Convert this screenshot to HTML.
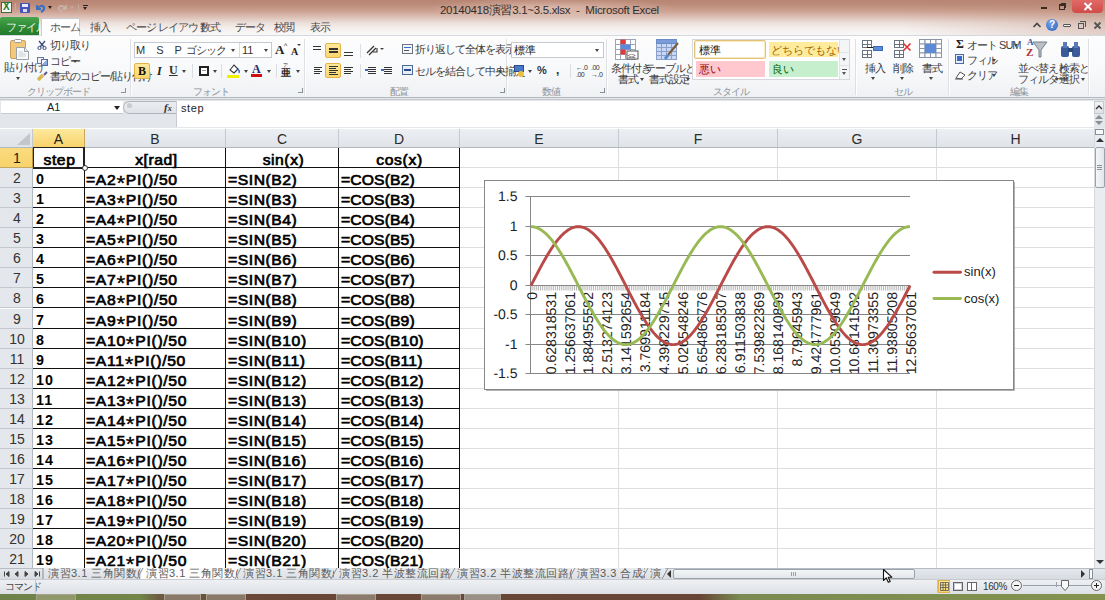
<!DOCTYPE html><html><head><meta charset="utf-8"><style>
*{margin:0;padding:0;box-sizing:border-box}
html,body{width:1105px;height:600px;overflow:hidden;background:#fff;font-family:"Liberation Sans",sans-serif}
body{position:relative}
.a{position:absolute;white-space:nowrap}
.jp{font-size:11px;color:#3c3c3c;line-height:12px;letter-spacing:-1px}
.gl{font-size:10px;color:#8e939a;line-height:11px;letter-spacing:-1px}
.sep{position:absolute;top:39px;width:1px;height:56px;background:#dde0e4;box-shadow:1px 0 0 #fff}
.dd{position:absolute;width:0;height:0;border-left:2.5px solid transparent;border-right:2.5px solid transparent;border-top:3px solid #444}
.hl{position:absolute;background:linear-gradient(#fde99a,#fbd66e);border:1px solid #e0b44a;border-radius:2px}
.ch{position:absolute;top:129px;height:19px;background:linear-gradient(#eceff3,#dfe3e8);border-right:1px solid #c4c9cf;font-size:14px;color:#2b2b2b;text-align:center;line-height:20px}
.rh{position:absolute;left:0;width:33px;height:20px;background:#e4e7eb;border-bottom:1px solid #c4c9cf;font-size:14px;color:#333;text-align:center;padding-left:1px;line-height:21px}
.c{position:absolute;height:20px;font-size:14px;font-weight:normal;color:#000;line-height:24px;white-space:nowrap;transform:scaleX(1.12);transform-origin:0 0;-webkit-text-stroke:.65px #000}
.as{font-size:20px;vertical-align:-5px;line-height:10px;font-weight:normal;-webkit-text-stroke:.3px #000}
</style></head><body>
<div class="a" style="left:0;top:0;width:1105px;height:35px;background:linear-gradient(#b88573 0px,#bb8a78 4px,#c99c8b 10px,#dcc0b5 17px,#ece0db 23px,#f5f0ee 29px,#f8f7f7 34px)"></div>
<div class="a" style="left:900px;top:0;width:205px;height:35px;background:linear-gradient(90deg,rgba(184,133,115,0),rgba(184,133,115,.35))"></div>
<div class="a" style="left:1px;top:2px;width:11px;height:11px;background:#f4f8f0;border:1px solid #3d6b3a"></div>
<div class="a" style="left:3px;top:1px;font-size:10px;font-weight:bold;color:#1f7a2a;line-height:12px">X</div>
<div class="a" style="left:15px;top:3px;width:1px;height:11px;background:#c8a898"></div>
<div class="a" style="left:20px;top:3px;width:10px;height:10px;background:#4a54b8;border-radius:1px"></div>
<div class="a" style="left:22px;top:4px;width:6px;height:3px;background:#e8ecf8"></div>
<div class="a" style="left:23px;top:9px;width:4px;height:3px;background:#d8dcf0"></div>
<svg class="a" style="left:35px;top:3px" width="11" height="10"><path d="M2 2 L2 6 L6 6 M2 6 Q6 1 9 4 Q10 7 6 9" stroke="#3b6fc0" stroke-width="2" fill="none"/></svg>
<div class="dd" style="left:48px;top:6px;border-top-color:#222"></div>
<svg class="a" style="left:57px;top:3px" width="11" height="10"><path d="M9 2 L9 6 L5 6 M9 6 Q5 1 2 4 Q1 7 5 9" stroke="#c9b4ab" stroke-width="1.6" fill="none"/></svg>
<div class="dd" style="left:70px;top:6px;border-top-color:#c0a89c"></div>
<div class="a" style="left:78px;top:4px;width:1px;height:9px;background:#c8a898"></div>
<div class="a" style="left:83px;top:5px;width:5px;height:1px;background:#222"></div>
<div class="dd" style="left:83px;top:7px;border-top-color:#222"></div>
<div class="a" style="left:425px;top:-2px;width:255px;height:20px;background:radial-gradient(ellipse at center,rgba(240,215,205,.55),rgba(240,215,205,0) 70%)"></div>
<div class="a" style="left:440px;top:4px;font-size:11.5px;color:#2e2e2e;line-height:13px;letter-spacing:-.3px">20140418演習3.1~3.5.xlsx&nbsp; - &nbsp;Microsoft Excel</div>
<div class="a" style="left:1041px;top:7px;width:6px;height:2px;background:#3a2a24"></div>
<div class="a" style="left:1059px;top:4px;width:6px;height:6px;border:1px solid #3a2a24;border-top-width:2px"></div>
<div class="a" style="left:1061px;top:3px;width:5px;height:5px;border-top:1px solid #3a2a24;border-right:1px solid #3a2a24"></div>
<div class="a" style="left:1072px;top:0;width:31px;height:13px;background:linear-gradient(#e06a66,#d04c4a);border-radius:0 0 4px 4px"></div>
<svg class="a" style="left:1083px;top:2px" width="10" height="9"><path d="M1.5 1 L8.5 8 M8.5 1 L1.5 8" stroke="#fff" stroke-width="2"/></svg>
<svg class="a" style="left:1032px;top:21px" width="10" height="8"><path d="M1.5 6 L5 2.5 L8.5 6" stroke="#444" stroke-width="1.6" fill="none"/></svg>
<div class="a" style="left:1046px;top:19px;width:12px;height:12px;border-radius:50%;background:radial-gradient(circle at 40% 35%,#6fa2e6,#2d64bf)"></div>
<div class="a" style="left:1049px;top:19px;width:6px;font-size:10px;font-weight:bold;color:#fff;line-height:12px">?</div>
<div class="a" style="left:1063px;top:24px;width:8px;height:3px;border:1px solid #555;border-radius:1px;background:#eee"></div>
<div class="a" style="left:1078px;top:23px;width:6px;height:6px;border:1px solid #555"></div>
<div class="a" style="left:1080px;top:21px;width:6px;height:6px;border-top:1px solid #555;border-right:1px solid #555"></div>
<svg class="a" style="left:1093px;top:21px" width="9" height="9"><path d="M1.5 1.5 L7.5 7.5 M7.5 1.5 L1.5 7.5" stroke="#555" stroke-width="1.8"/></svg>
<div class="a" style="left:0;top:17px;width:39px;height:18px;background:linear-gradient(#4aa54e,#2f8a36 55%,#237b2b);border-radius:2px 2px 0 0"></div>
<div class="a jp" style="left:6px;top:21px;color:#e8f6e6">ファイル</div>
<div class="a" style="left:41px;top:18px;width:39px;height:18px;background:#fdfdfd;border:1px solid #c9cdd3;border-bottom:none;border-radius:2px 2px 0 0"></div>
<div class="a jp" style="left:50px;top:21px;color:#5a5a5a">ホーム</div>
<div class="a jp" style="left:90px;top:21px;color:#4a4a4a">挿入</div>
<div class="a jp" style="left:126px;top:21px;color:#4a4a4a">ページ レイアウト</div>
<div class="a jp" style="left:200px;top:21px;color:#4a4a4a">数式</div>
<div class="a jp" style="left:235px;top:21px;color:#4a4a4a">データ</div>
<div class="a jp" style="left:274px;top:21px;color:#4a4a4a">校閲</div>
<div class="a jp" style="left:310px;top:21px;color:#4a4a4a">表示</div>
<div class="a" style="left:0;top:35px;width:1105px;height:63px;background:linear-gradient(#fdfdfe,#f8f9fa 55%,#eff1f4);border-top:1px solid #d5d9de;border-bottom:1px solid #b4b9c0"></div>
<div class="a" style="left:0;top:35px;width:41px;height:1px;background:#d5d9de"></div>
<div class="a" style="left:42px;top:35px;width:37px;height:1px;background:#fdfdfd"></div>
<div class="sep" style="left:130px"></div>
<div class="sep" style="left:304px"></div>
<div class="sep" style="left:506px"></div>
<div class="sep" style="left:606px"></div>
<div class="sep" style="left:855px"></div>
<div class="sep" style="left:948px"></div>
<div class="sep" style="left:1088px"></div>
<div class="a gl" style="left:18px;top:86px;width:80px;text-align:center">クリップボード</div>
<div class="a gl" style="left:171px;top:86px;width:80px;text-align:center">フォント</div>
<div class="a gl" style="left:359px;top:86px;width:80px;text-align:center">配置</div>
<div class="a gl" style="left:511px;top:86px;width:80px;text-align:center">数値</div>
<div class="a gl" style="left:691px;top:86px;width:80px;text-align:center">スタイル</div>
<div class="a gl" style="left:863px;top:86px;width:80px;text-align:center">セル</div>
<div class="a gl" style="left:979px;top:86px;width:80px;text-align:center">編集</div>
<div class="a" style="left:121px;top:88px;width:5px;height:5px;border-right:1px solid #8a9098;border-bottom:1px solid #8a9098"></div>
<div class="a" style="left:298px;top:88px;width:5px;height:5px;border-right:1px solid #8a9098;border-bottom:1px solid #8a9098"></div>
<div class="a" style="left:500px;top:88px;width:5px;height:5px;border-right:1px solid #8a9098;border-bottom:1px solid #8a9098"></div>
<div class="a" style="left:600px;top:88px;width:5px;height:5px;border-right:1px solid #8a9098;border-bottom:1px solid #8a9098"></div>
<svg class="a" style="left:9px;top:38px" width="21" height="23"><rect x="1.5" y="2.5" width="15" height="18" rx="1.5" fill="#f2c97a" stroke="#c9a060"/><rect x="5.5" y="1.5" width="7" height="3" rx="1" fill="#fff" stroke="#9a9a9a"/><path d="M7.5 9.5 H15.5 L19.5 13.5 V21.5 H7.5 Z" fill="#fafafa" stroke="#9aa0a8"/><path d="M15.5 9.5 V13.5 H19.5" fill="#e8e8e8" stroke="#9aa0a8"/><path d="M9.5 14 H14 M9.5 16 H17 M9.5 18 H17" stroke="#c8ccd0"/></svg>
<div class="a jp" style="left:4px;top:61px">貼り付け</div>
<div class="dd" style="left:16px;top:77px"></div>
<svg class="a" style="left:37px;top:40px" width="10" height="10"><path d="M2 1 L7 7 M8 1 L3 7" stroke="#3a4a80" stroke-width="1.3"/><circle cx="2.5" cy="8" r="1.6" fill="none" stroke="#3a4a80"/><circle cx="7.5" cy="8" r="1.6" fill="none" stroke="#3a4a80"/></svg>
<div class="a jp" style="left:50px;top:39px">切り取り</div>
<div class="a" style="left:37px;top:57px;width:7px;height:7px;background:#eef2f8;border:1px solid #6a7a9a"></div>
<div class="a" style="left:41px;top:59px;width:7px;height:7px;background:linear-gradient(135deg,#f4f6fa 50%,#8aaae0 50%);border:1px solid #5a6a9a"></div>
<div class="a jp" style="left:50px;top:55px">コピー</div>
<div class="dd" style="left:73px;top:60px"></div>
<svg class="a" style="left:37px;top:71px" width="12" height="10"><path d="M1 9 L6 4" stroke="#d8b850" stroke-width="3.5"/><path d="M7 4 L10 1" stroke="#5a5a8a" stroke-width="2"/></svg>
<div class="a jp" style="left:50px;top:70px">書式のコピー/貼り付け</div>
<div class="a" style="left:134px;top:42px;width:138px;height:16px;background:#fff;border:1px solid #c5cad1"></div>
<div class="a" style="left:239px;top:43px;width:1px;height:14px;background:#d8dce0"></div>
<div class="a" style="left:136px;top:44px;font-size:11px;color:#333;line-height:12px;letter-spacing:-1px"><span style="letter-spacing:4px">M S P</span>ゴシック</div>
<div class="dd" style="left:231px;top:49px"></div>
<div class="a" style="left:242px;top:44px;font-size:11px;color:#333;line-height:12px">11</div>
<div class="dd" style="left:264px;top:49px"></div>
<div class="a" style="left:275px;top:43px;font-family:'Liberation Serif';font-size:13px;font-weight:bold;color:#222;line-height:14px">A</div>
<div class="a" style="left:284px;top:42px;font-size:7px;color:#222;line-height:7px">^</div>
<div class="a" style="left:291px;top:46px;font-family:'Liberation Serif';font-size:10px;font-weight:bold;color:#222;line-height:11px">A</div>
<div class="dd" style="left:297px;top:44px;border-left-width:2px;border-right-width:2px;border-top-width:2px"></div>
<div class="hl" style="left:134px;top:63px;width:16px;height:16px"></div>
<div class="a" style="left:138px;top:64px;font-family:'Liberation Serif';font-size:12px;font-weight:bold;color:#111;line-height:14px">B</div>
<div class="a" style="left:157px;top:64px;font-family:'Liberation Serif';font-size:12px;font-style:italic;font-weight:bold;color:#222;line-height:14px">I</div>
<div class="a" style="left:169px;top:63px;font-family:'Liberation Serif';font-size:12px;font-weight:bold;color:#333;line-height:14px;text-decoration:underline">U</div>
<div class="dd" style="left:182px;top:70px"></div>
<div class="a" style="left:192px;top:64px;width:1px;height:14px;background:#dadde2"></div>
<div class="a" style="left:199px;top:66px;width:10px;height:10px;border:2px solid #222;background:#fff"></div>
<div class="a" style="left:202px;top:70px;width:4px;height:1px;background:#999"></div>
<div class="dd" style="left:213px;top:70px"></div>
<div class="a" style="left:221px;top:64px;width:1px;height:14px;background:#dadde2"></div>
<svg class="a" style="left:227px;top:63px" width="14" height="12"><path d="M3 7 L7 2 L11 6 L7 10 Z" fill="#fff" stroke="#333" stroke-width="1.1"/><path d="M11 6 Q13 8 12 10" stroke="#3a6ac8" stroke-width="1.5" fill="none"/></svg>
<div class="a" style="left:227px;top:75px;width:12px;height:3px;background:#f2f200"></div>
<div class="dd" style="left:244px;top:70px"></div>
<div class="a" style="left:252px;top:62px;font-family:'Liberation Serif';font-size:12px;font-weight:bold;color:#1a2a70;line-height:14px">A</div>
<div class="a" style="left:251px;top:74px;width:11px;height:3px;background:#d01010"></div>
<div class="dd" style="left:267px;top:70px"></div>
<div class="a" style="left:276px;top:64px;width:1px;height:14px;background:#dadde2"></div>
<div class="a" style="left:283px;top:63px;font-size:5px;color:#333;line-height:5px">ア</div>
<div class="a" style="left:281px;top:67px;font-size:10px;color:#222;line-height:11px;font-weight:bold">亜</div>
<div class="dd" style="left:296px;top:70px"></div>
<div class="a" style="left:313px;top:46px;width:8px;height:1px;background:#333"></div>
<div class="a" style="left:313px;top:49px;width:8px;height:1px;background:#333"></div>
<div class="hl" style="left:325px;top:43px;width:16px;height:15px"></div>
<div class="a" style="left:329px;top:48px;width:9px;height:2px;background:#333"></div>
<div class="a" style="left:329px;top:51px;width:9px;height:2px;background:#333"></div>
<div class="a" style="left:344px;top:52px;width:9px;height:1px;background:#333"></div>
<div class="a" style="left:344px;top:55px;width:9px;height:1px;background:#333"></div>
<div class="a" style="left:360px;top:44px;width:1px;height:14px;background:#dadde2"></div>
<svg class="a" style="left:365px;top:44px" width="18" height="12"><path d="M2 9 L9 2 M4 11 L11 4" stroke="#333" stroke-width="1.3"/><path d="M8 8 L12 8 L12 4" stroke="#333" stroke-width="1.1" fill="none"/></svg>
<div class="dd" style="left:380px;top:48px;border-left-width:2px;border-right-width:2px;border-top-width:2px"></div>
<div class="a" style="left:402px;top:44px;width:11px;height:10px;border:1px solid #6a7380;background:#f4f6f8"></div>
<div class="a" style="left:404px;top:47px;width:7px;height:1px;background:#3a6ac8"></div>
<div class="a" style="left:404px;top:50px;width:5px;height:1px;background:#555"></div>
<div class="a jp" style="left:415px;top:43px">折り返して全体を表示する</div>
<div class="a" style="left:314px;top:67px;width:8px;height:1px;background:#333"></div>
<div class="a" style="left:314px;top:69px;width:6px;height:1px;background:#333"></div>
<div class="a" style="left:314px;top:71px;width:8px;height:1px;background:#333"></div>
<div class="a" style="left:314px;top:73px;width:6px;height:1px;background:#333"></div>
<div class="hl" style="left:325px;top:63px;width:16px;height:15px"></div>
<div class="a" style="left:329px;top:66px;width:9px;height:1px;background:#333"></div>
<div class="a" style="left:329px;top:68px;width:7px;height:1px;background:#333"></div>
<div class="a" style="left:329px;top:70px;width:9px;height:1px;background:#333"></div>
<div class="a" style="left:329px;top:72px;width:7px;height:1px;background:#333"></div>
<div class="a" style="left:329px;top:74px;width:9px;height:1px;background:#333"></div>
<div class="a" style="left:344px;top:67px;width:9px;height:1px;background:#333"></div>
<div class="a" style="left:344px;top:69px;width:7px;height:1px;background:#333"></div>
<div class="a" style="left:344px;top:71px;width:9px;height:1px;background:#333"></div>
<div class="a" style="left:344px;top:73px;width:7px;height:1px;background:#333"></div>
<div class="a" style="left:360px;top:64px;width:1px;height:14px;background:#dadde2"></div>
<div class="a" style="left:368px;top:67px;width:8px;height:1px;background:#333"></div>
<div class="a" style="left:368px;top:69px;width:8px;height:1px;background:#333"></div>
<div class="a" style="left:368px;top:71px;width:8px;height:1px;background:#333"></div>
<div class="a" style="left:368px;top:73px;width:8px;height:1px;background:#333"></div>
<div class="a" style="left:365px;top:69px;width:3px;height:2px;background:#3a6ac8"></div>
<div class="a" style="left:384px;top:67px;width:8px;height:1px;background:#333"></div>
<div class="a" style="left:384px;top:69px;width:8px;height:1px;background:#333"></div>
<div class="a" style="left:384px;top:71px;width:8px;height:1px;background:#333"></div>
<div class="a" style="left:384px;top:73px;width:8px;height:1px;background:#333"></div>
<div class="a" style="left:381px;top:69px;width:3px;height:2px;background:#3a6ac8"></div>
<div class="a" style="left:402px;top:65px;width:11px;height:10px;border:1px solid #4a6a9a;background:#e8eef8"></div>
<div class="a" style="left:404px;top:69px;width:7px;height:2px;background:#2a4a8a"></div>
<div class="a jp" style="left:415px;top:65px">セルを結合して中央揃え</div>
<div class="dd" style="left:498px;top:70px"></div>
<div class="a" style="left:511px;top:42px;width:93px;height:16px;background:#fff;border:1px solid #c5cad1"></div>
<div class="a" style="left:514px;top:44px;font-size:11px;color:#222;line-height:12px">標準</div>
<div class="dd" style="left:595px;top:49px"></div>
<div class="a" style="left:514px;top:65px;width:10px;height:7px;background:#4a78c8;border:1px solid #2a4a8a"></div>
<div class="a" style="left:518px;top:71px;width:6px;height:6px;background:#e8c040;border-radius:50%"></div>
<div class="dd" style="left:528px;top:70px"></div>
<div class="a" style="left:537px;top:64px;font-size:11px;font-weight:bold;color:#333;line-height:13px">%</div>
<div class="a" style="left:556px;top:64px;font-size:12px;font-weight:bold;color:#333;line-height:13px">,</div>
<div class="a" style="left:570px;top:64px;width:1px;height:14px;background:#dadde2"></div>
<div class="a" style="left:576px;top:64px;font-size:7px;color:#333;line-height:7px;letter-spacing:-.5px">←.0<br>.00</div>
<div class="a" style="left:591px;top:64px;font-size:7px;color:#333;line-height:7px;letter-spacing:-.5px">.00<br>→.0</div>
<svg class="a" style="left:615px;top:39px" width="24" height="21"><g stroke="#9aa6b8" stroke-width="1" fill="#fff"><rect x="0.5" y="0.5" width="5" height="5"/><rect x="0.5" y="5.5" width="5" height="5"/><rect x="0.5" y="10.5" width="5" height="5"/><rect x="0.5" y="15.5" width="5" height="5"/><rect x="5.5" y="0.5" width="5" height="5"/><rect x="5.5" y="5.5" width="5" height="5"/><rect x="5.5" y="10.5" width="5" height="5"/><rect x="5.5" y="15.5" width="5" height="5"/><rect x="10.5" y="0.5" width="5" height="5"/><rect x="10.5" y="5.5" width="5" height="5"/><rect x="10.5" y="10.5" width="5" height="5"/><rect x="10.5" y="15.5" width="5" height="5"/><rect x="15.5" y="0.5" width="5" height="5"/><rect x="15.5" y="5.5" width="5" height="5"/><rect x="15.5" y="10.5" width="5" height="5"/><rect x="15.5" y="15.5" width="5" height="5"/></g><rect x="5.5" y="0.5" width="5" height="5" fill="#e03a3a"/><rect x="5.5" y="5.5" width="10" height="5" fill="#5a8ae0"/><rect x="5.5" y="10.5" width="5" height="5" fill="#e03a3a"/><rect x="12" y="12" width="11" height="8" fill="#fff" stroke="#555"/><text x="13" y="19" font-size="7" fill="#333">≤≥</text></svg>
<div class="a jp" style="left:611px;top:62px">条件付き</div>
<div class="a jp" style="left:618px;top:73px">書式</div>
<div class="dd" style="left:640px;top:78px"></div>
<svg class="a" style="left:656px;top:39px" width="24" height="21"><g stroke="#8aa0c8" stroke-width="1" fill="#c8d8f4"><rect x="0.5" y="0.5" width="5" height="4"/><rect x="0.5" y="4.5" width="5" height="4"/><rect x="0.5" y="8.5" width="5" height="4"/><rect x="0.5" y="12.5" width="5" height="4"/><rect x="0.5" y="16.5" width="5" height="4"/><rect x="5.5" y="0.5" width="5" height="4"/><rect x="5.5" y="4.5" width="5" height="4"/><rect x="5.5" y="8.5" width="5" height="4"/><rect x="5.5" y="12.5" width="5" height="4"/><rect x="5.5" y="16.5" width="5" height="4"/><rect x="10.5" y="0.5" width="5" height="4"/><rect x="10.5" y="4.5" width="5" height="4"/><rect x="10.5" y="8.5" width="5" height="4"/><rect x="10.5" y="12.5" width="5" height="4"/><rect x="10.5" y="16.5" width="5" height="4"/><rect x="15.5" y="0.5" width="5" height="4"/><rect x="15.5" y="4.5" width="5" height="4"/><rect x="15.5" y="8.5" width="5" height="4"/><rect x="15.5" y="12.5" width="5" height="4"/><rect x="15.5" y="16.5" width="5" height="4"/></g><rect x="0.5" y="0.5" width="20" height="4" fill="#7a9ad8" stroke="#6a8ac8"/><path d="M22 4 L12 16" stroke="#7a5a3a" stroke-width="2"/><path d="M12 16 L9 20" stroke="#5a8ad0" stroke-width="3"/></svg>
<div class="a jp" style="left:645px;top:62px">テーブルとして</div>
<div class="a jp" style="left:649px;top:73px">書式設定</div>
<div class="dd" style="left:686px;top:78px"></div>
<div class="a" style="left:692px;top:39px;width:158px;height:41px;background:#fff;border:1px solid #d5d9de"></div>
<div class="a" style="left:694px;top:40px;width:72px;height:19px;background:#fff;border:1px solid #e2c27a;border-radius:2px;box-shadow:inset 0 0 0 1px #fbeac0"></div>
<div class="a" style="left:699px;top:44px;font-size:11px;color:#111;line-height:12px">標準</div>
<div class="a" style="left:769px;top:42px;width:69px;height:15px;background:#ffeb9c"></div>
<div class="a" style="left:771px;top:44px;font-size:11px;color:#9c6500;line-height:12px">どちらでもない</div>
<div class="a" style="left:696px;top:61px;width:69px;height:16px;background:#ffc7ce"></div>
<div class="a" style="left:699px;top:63px;font-size:11px;color:#9c0006;line-height:12px">悪い</div>
<div class="a" style="left:769px;top:61px;width:69px;height:16px;background:#c6efce"></div>
<div class="a" style="left:772px;top:63px;font-size:11px;color:#006100;line-height:12px">良い</div>
<div class="a" style="left:839px;top:40px;width:10px;height:39px;background:#f4f5f7;border-left:1px solid #e0e3e7"></div>
<div class="a" style="left:840px;top:52px;width:9px;height:1px;background:#e0e3e7"></div><div class="a" style="left:840px;top:65px;width:9px;height:1px;background:#e0e3e7"></div>
<div class="dd" style="left:842px;top:58px;border-top-color:#555"></div>
<div class="a" style="left:842px;top:69px;width:5px;height:1px;background:#555"></div><div class="dd" style="left:842px;top:72px;border-top-color:#555"></div>
<div class="a" style="left:862px;top:40px;width:10px;height:8px;border:1px solid #6a7380;background:#fff"></div>
<div class="a" style="left:867px;top:40px;width:1px;height:8px;background:#6a7380"></div>
<div class="a" style="left:862px;top:44px;width:10px;height:1px;background:#6a7380"></div>
<div class="a" style="left:862px;top:50px;width:10px;height:8px;border:1px solid #6a7380;background:#fff"></div>
<div class="a" style="left:867px;top:50px;width:1px;height:8px;background:#6a7380"></div>
<div class="a" style="left:862px;top:54px;width:10px;height:1px;background:#6a7380"></div>
<div class="a" style="left:873px;top:46px;width:10px;height:5px;background:#5a8ad8;border:1px solid #3a6ab8"></div>
<div class="a" style="left:867px;top:47px;width:6px;height:1px;background:#222"></div>
<div class="a jp" style="left:865px;top:62px">挿入</div>
<div class="dd" style="left:871px;top:77px"></div>
<div class="a" style="left:894px;top:40px;width:10px;height:8px;border:1px solid #6a7380;background:#fff"></div>
<div class="a" style="left:899px;top:40px;width:1px;height:8px;background:#6a7380"></div>
<div class="a" style="left:894px;top:44px;width:10px;height:1px;background:#6a7380"></div>
<div class="a" style="left:894px;top:50px;width:10px;height:8px;border:1px solid #6a7380;background:#fff"></div>
<div class="a" style="left:899px;top:50px;width:1px;height:8px;background:#6a7380"></div>
<div class="a" style="left:894px;top:54px;width:10px;height:1px;background:#6a7380"></div>
<svg class="a" style="left:902px;top:42px" width="10" height="10"><path d="M1.5 1.5 L8.5 8.5 M8.5 1.5 L1.5 8.5" stroke="#e03030" stroke-width="1.6"/></svg>
<div class="a jp" style="left:893px;top:62px">削除</div>
<div class="dd" style="left:900px;top:77px"></div>
<svg class="a" style="left:919px;top:39px" width="23" height="20"><g stroke="#8a96a8" fill="#fff"><rect x="0.5" y="0.5" width="5.5" height="4.5"/><rect x="0.5" y="5.0" width="5.5" height="4.5"/><rect x="0.5" y="9.5" width="5.5" height="4.5"/><rect x="0.5" y="14.0" width="5.5" height="4.5"/><rect x="6.0" y="0.5" width="5.5" height="4.5"/><rect x="6.0" y="5.0" width="5.5" height="4.5"/><rect x="6.0" y="9.5" width="5.5" height="4.5"/><rect x="6.0" y="14.0" width="5.5" height="4.5"/><rect x="11.5" y="0.5" width="5.5" height="4.5"/><rect x="11.5" y="5.0" width="5.5" height="4.5"/><rect x="11.5" y="9.5" width="5.5" height="4.5"/><rect x="11.5" y="14.0" width="5.5" height="4.5"/><rect x="17.0" y="0.5" width="5.5" height="4.5"/><rect x="17.0" y="5.0" width="5.5" height="4.5"/><rect x="17.0" y="9.5" width="5.5" height="4.5"/><rect x="17.0" y="14.0" width="5.5" height="4.5"/></g><rect x="6" y="5" width="11" height="9" fill="#5a8ad8"/></svg>
<div class="a jp" style="left:922px;top:62px">書式</div>
<div class="dd" style="left:929px;top:77px"></div>
<div class="a" style="left:956px;top:38px;font-family:'Liberation Serif';font-size:12px;font-weight:bold;color:#222;line-height:13px">Σ</div>
<div class="a jp" style="left:967px;top:39px">オート SUM</div>
<div class="dd" style="left:1014px;top:44px"></div>
<div class="a" style="left:955px;top:54px;width:9px;height:10px;background:#e8eef8;border:1px solid #4a6ab0"></div>
<div class="a" style="left:957px;top:56px;width:5px;height:5px;background:#3a6ac8"></div>
<div class="a jp" style="left:967px;top:54px">フィル</div>
<div class="dd" style="left:992px;top:59px"></div>
<svg class="a" style="left:954px;top:70px" width="12" height="10"><path d="M2 8 L6 2 L11 5 L7 9 Z" fill="#fff" stroke="#555" stroke-width="1"/><path d="M1 9 L9 9" stroke="#555"/></svg>
<div class="a jp" style="left:967px;top:69px">クリア</div>
<div class="dd" style="left:992px;top:74px"></div>
<div class="a" style="left:1027px;top:38px;font-family:'Liberation Serif';font-size:9px;font-weight:bold;color:#3a5aa0;line-height:9px">A</div>
<div class="a" style="left:1026px;top:47px;font-family:'Liberation Serif';font-size:11px;font-weight:bold;color:#b03030;line-height:11px">Z</div>
<svg class="a" style="left:1032px;top:40px" width="16" height="19"><path d="M1 2 L15 2 L9 10 L9 17 L7 17 L7 10 Z" fill="#b8c0c8" stroke="#7a8088"/></svg>
<div class="a jp" style="left:1018px;top:62px">並べ替えと</div>
<div class="a jp" style="left:1018px;top:73px">フィルター</div>
<div class="dd" style="left:1055px;top:78px"></div>
<svg class="a" style="left:1060px;top:41px" width="21" height="17"><rect x="1" y="5" width="8" height="11" rx="2" fill="#3a5a9a"/><rect x="12" y="5" width="8" height="11" rx="2" fill="#3a5a9a"/><rect x="8" y="7" width="5" height="4" fill="#2a4a7a"/><rect x="3" y="1" width="4" height="6" fill="#5a7ab8"/><rect x="14" y="1" width="4" height="6" fill="#5a7ab8"/></svg>
<div class="a jp" style="left:1059px;top:62px">検索と</div>
<div class="a jp" style="left:1059px;top:73px">選択</div>
<div class="dd" style="left:1081px;top:78px"></div>
<div class="a" style="left:0;top:98px;width:1105px;height:31px;background:#e3e6ea;border-bottom:1px solid #a9aeb5"></div>
<div class="a" style="left:0;top:99px;width:1105px;height:1px;background:#c5c9ce"></div>
<div class="a" style="left:1px;top:101px;width:122px;height:13px;background:#fff;border-bottom:1px solid #c8ccd2"></div>
<div class="a" style="left:47px;top:101px;font-size:11px;color:#222;line-height:13px">A1</div>
<div class="dd" style="left:114px;top:106px;border-top-color:#222;border-left-width:3px;border-right-width:3px;border-top-width:4px"></div>
<div class="a" style="left:123px;top:101px;width:53px;height:13px;background:linear-gradient(#eceef1,#dfe2e6);border:1px solid #b0b5bc;border-right:none;border-radius:7px 0 0 7px"></div>
<div class="a" style="left:127px;top:103px;width:5px;height:5px;border-radius:50%;background:#c8ccd2"></div>
<div class="a" style="left:164px;top:101px;font-family:'Liberation Serif';font-size:11px;font-style:italic;font-weight:bold;color:#333;line-height:12px">f<span style="font-size:8px">x</span></div>
<div class="a" style="left:176px;top:101px;width:918px;height:26px;background:#fff;border-left:1px solid #c8ccd2"></div>
<div class="a" style="left:181px;top:102px;font-size:11px;color:#222;line-height:13px;letter-spacing:.6px">step</div>
<div class="a" style="left:1094px;top:101px;width:10px;height:13px;background:linear-gradient(#f4f5f7,#dfe2e6);border:1px solid #c5cad0"></div>
<svg class="a" style="left:1095px;top:104px" width="8" height="6"><path d="M1 5 L4 2 L7 5" stroke="#333" stroke-width="1.3" fill="none"/></svg>
<div class="a" style="left:1095px;top:115px;width:0;height:0;border-left:4px solid transparent;border-right:4px solid transparent;border-bottom:4px solid #8a9098"></div>
<div class="a" style="left:1095px;top:121px;width:0;height:0;border-left:4px solid transparent;border-right:4px solid transparent;border-top:4px solid #8a9098"></div>
<div class="a" style="left:0;top:128px;width:1094px;height:440px;background:#fff"></div>
<div class="a" style="left:0;top:129px;width:33px;height:19px;background:linear-gradient(#e8ebef,#dfe2e7);border-right:1px solid #c4c9cf"></div>
<div class="a" style="left:17px;top:133px;width:0;height:0;border-left:13px solid transparent;border-bottom:12px solid #c3c7cc"></div>
<div class="ch" style="left:33px;width:52px;background:linear-gradient(#fde99c,#f8d168);border-right:1px solid #c8a860;color:#222">A</div>
<div class="ch" style="left:85px;width:141px">B</div>
<div class="ch" style="left:226px;width:113px">C</div>
<div class="ch" style="left:339px;width:121px">D</div>
<div class="ch" style="left:460px;width:159px">E</div>
<div class="ch" style="left:619px;width:159px">F</div>
<div class="ch" style="left:778px;width:159px">G</div>
<div class="ch" style="left:937px;width:157px;border-right:none">H</div>
<div class="a" style="left:0;top:147px;width:1094px;height:1px;background:#b2b8bf"></div>
<div class="a" style="left:33px;top:147px;width:51px;height:1px;background:#c29a40"></div>
<div class="a" style="left:618px;top:148px;width:1px;height:420px;background:#dcdee0"></div>
<div class="a" style="left:777px;top:148px;width:1px;height:420px;background:#dcdee0"></div>
<div class="a" style="left:936px;top:148px;width:1px;height:420px;background:#dcdee0"></div>
<div class="a" style="left:460px;top:167px;width:634px;height:1px;background:#dcdee0"></div>
<div class="a" style="left:460px;top:187px;width:634px;height:1px;background:#dcdee0"></div>
<div class="a" style="left:460px;top:207px;width:634px;height:1px;background:#dcdee0"></div>
<div class="a" style="left:460px;top:227px;width:634px;height:1px;background:#dcdee0"></div>
<div class="a" style="left:460px;top:247px;width:634px;height:1px;background:#dcdee0"></div>
<div class="a" style="left:460px;top:267px;width:634px;height:1px;background:#dcdee0"></div>
<div class="a" style="left:460px;top:287px;width:634px;height:1px;background:#dcdee0"></div>
<div class="a" style="left:460px;top:307px;width:634px;height:1px;background:#dcdee0"></div>
<div class="a" style="left:460px;top:328px;width:634px;height:1px;background:#dcdee0"></div>
<div class="a" style="left:460px;top:348px;width:634px;height:1px;background:#dcdee0"></div>
<div class="a" style="left:460px;top:368px;width:634px;height:1px;background:#dcdee0"></div>
<div class="a" style="left:460px;top:388px;width:634px;height:1px;background:#dcdee0"></div>
<div class="a" style="left:460px;top:408px;width:634px;height:1px;background:#dcdee0"></div>
<div class="a" style="left:460px;top:428px;width:634px;height:1px;background:#dcdee0"></div>
<div class="a" style="left:460px;top:448px;width:634px;height:1px;background:#dcdee0"></div>
<div class="a" style="left:460px;top:468px;width:634px;height:1px;background:#dcdee0"></div>
<div class="a" style="left:460px;top:488px;width:634px;height:1px;background:#dcdee0"></div>
<div class="a" style="left:460px;top:508px;width:634px;height:1px;background:#dcdee0"></div>
<div class="a" style="left:460px;top:528px;width:634px;height:1px;background:#dcdee0"></div>
<div class="a" style="left:460px;top:548px;width:634px;height:1px;background:#dcdee0"></div>
<div class="a" style="left:460px;top:568px;width:634px;height:1px;background:#dcdee0"></div>
<div class="rh" style="top:148px;background:linear-gradient(#fbdb7e,#f8d36c);border-bottom-color:#c8a860;color:#222">1</div>
<div class="rh" style="top:168px">2</div>
<div class="rh" style="top:188px">3</div>
<div class="rh" style="top:208px">4</div>
<div class="rh" style="top:228px">5</div>
<div class="rh" style="top:248px">6</div>
<div class="rh" style="top:268px">7</div>
<div class="rh" style="top:288px">8</div>
<div class="rh" style="top:309px">9</div>
<div class="rh" style="top:329px">10</div>
<div class="rh" style="top:349px">11</div>
<div class="rh" style="top:369px">12</div>
<div class="rh" style="top:389px">13</div>
<div class="rh" style="top:409px">14</div>
<div class="rh" style="top:429px">15</div>
<div class="rh" style="top:449px">16</div>
<div class="rh" style="top:469px">17</div>
<div class="rh" style="top:489px">18</div>
<div class="rh" style="top:509px">19</div>
<div class="rh" style="top:529px">20</div>
<div class="rh" style="top:549px">21</div>
<div class="a" style="left:32px;top:148px;width:1px;height:420px;background:#b2b8bf"></div>
<div class="a" style="left:32px;top:148px;width:1px;height:20px;background:#c29a40"></div>
<div class="a" style="left:33px;top:167px;width:427px;height:1px;background:#111"></div>
<div class="a" style="left:33px;top:187px;width:427px;height:1px;background:#111"></div>
<div class="a" style="left:33px;top:207px;width:427px;height:1px;background:#111"></div>
<div class="a" style="left:33px;top:227px;width:427px;height:1px;background:#111"></div>
<div class="a" style="left:33px;top:247px;width:427px;height:1px;background:#111"></div>
<div class="a" style="left:33px;top:267px;width:427px;height:1px;background:#111"></div>
<div class="a" style="left:33px;top:287px;width:427px;height:1px;background:#111"></div>
<div class="a" style="left:33px;top:307px;width:427px;height:1px;background:#111"></div>
<div class="a" style="left:33px;top:328px;width:427px;height:1px;background:#111"></div>
<div class="a" style="left:33px;top:348px;width:427px;height:1px;background:#111"></div>
<div class="a" style="left:33px;top:368px;width:427px;height:1px;background:#111"></div>
<div class="a" style="left:33px;top:388px;width:427px;height:1px;background:#111"></div>
<div class="a" style="left:33px;top:408px;width:427px;height:1px;background:#111"></div>
<div class="a" style="left:33px;top:428px;width:427px;height:1px;background:#111"></div>
<div class="a" style="left:33px;top:448px;width:427px;height:1px;background:#111"></div>
<div class="a" style="left:33px;top:468px;width:427px;height:1px;background:#111"></div>
<div class="a" style="left:33px;top:488px;width:427px;height:1px;background:#111"></div>
<div class="a" style="left:33px;top:508px;width:427px;height:1px;background:#111"></div>
<div class="a" style="left:33px;top:528px;width:427px;height:1px;background:#111"></div>
<div class="a" style="left:33px;top:548px;width:427px;height:1px;background:#111"></div>
<div class="a" style="left:33px;top:568px;width:427px;height:1px;background:#111"></div>
<div class="a" style="left:84px;top:148px;width:1px;height:420px;background:#111"></div>
<div class="a" style="left:225px;top:148px;width:1px;height:420px;background:#111"></div>
<div class="a" style="left:338px;top:148px;width:1px;height:420px;background:#111"></div>
<div class="a" style="left:459px;top:148px;width:1px;height:420px;background:#111"></div>
<div class="a" style="left:33px;top:147px;width:52px;height:22px;border:2px solid #222;border-left-width:1.5px;border-top-width:1.5px"></div>
<div class="a" style="left:81.5px;top:165px;width:6px;height:6px;background:#fff;border:1.5px solid #333;border-radius:50%"></div>
<div class="c" style="left:34px;top:148px;width:51px;text-align:center;letter-spacing:.5px;transform-origin:50% 0">step</div>
<div class="c" style="left:86px;top:148px;width:141px;text-align:center;letter-spacing:.5px;transform-origin:50% 0">x[rad]</div>
<div class="c" style="left:227px;top:148px;width:113px;text-align:center;letter-spacing:.5px;transform-origin:50% 0">sin(x)</div>
<div class="c" style="left:339px;top:148px;width:121px;text-align:center;letter-spacing:.6px;transform-origin:50% 0">cos(x)</div>
<div class="c" style="left:36px;top:167px;letter-spacing:1.2px;transform:scaleX(.95);font-size:15px;font-weight:bold;-webkit-text-stroke:0px">0</div>
<div class="c" style="left:86px;top:168px;letter-spacing:0.62px">=A2<span class="as">*</span>PI()/50</div>
<div class="c" style="left:228px;top:168px;letter-spacing:0.5px">=SIN(B2)</div>
<div class="c" style="left:341px;top:168px;letter-spacing:0.12px">=COS(B2)</div>
<div class="c" style="left:36px;top:187px;letter-spacing:1.2px;transform:scaleX(.95);font-size:15px;font-weight:bold;-webkit-text-stroke:0px">1</div>
<div class="c" style="left:86px;top:188px;letter-spacing:0.62px">=A3<span class="as">*</span>PI()/50</div>
<div class="c" style="left:228px;top:188px;letter-spacing:0.5px">=SIN(B3)</div>
<div class="c" style="left:341px;top:188px;letter-spacing:0.12px">=COS(B3)</div>
<div class="c" style="left:36px;top:207px;letter-spacing:1.2px;transform:scaleX(.95);font-size:15px;font-weight:bold;-webkit-text-stroke:0px">2</div>
<div class="c" style="left:86px;top:208px;letter-spacing:0.62px">=A4<span class="as">*</span>PI()/50</div>
<div class="c" style="left:228px;top:208px;letter-spacing:0.5px">=SIN(B4)</div>
<div class="c" style="left:341px;top:208px;letter-spacing:0.12px">=COS(B4)</div>
<div class="c" style="left:36px;top:227px;letter-spacing:1.2px;transform:scaleX(.95);font-size:15px;font-weight:bold;-webkit-text-stroke:0px">3</div>
<div class="c" style="left:86px;top:228px;letter-spacing:0.62px">=A5<span class="as">*</span>PI()/50</div>
<div class="c" style="left:228px;top:228px;letter-spacing:0.5px">=SIN(B5)</div>
<div class="c" style="left:341px;top:228px;letter-spacing:0.12px">=COS(B5)</div>
<div class="c" style="left:36px;top:247px;letter-spacing:1.2px;transform:scaleX(.95);font-size:15px;font-weight:bold;-webkit-text-stroke:0px">4</div>
<div class="c" style="left:86px;top:248px;letter-spacing:0.62px">=A6<span class="as">*</span>PI()/50</div>
<div class="c" style="left:228px;top:248px;letter-spacing:0.5px">=SIN(B6)</div>
<div class="c" style="left:341px;top:248px;letter-spacing:0.12px">=COS(B6)</div>
<div class="c" style="left:36px;top:267px;letter-spacing:1.2px;transform:scaleX(.95);font-size:15px;font-weight:bold;-webkit-text-stroke:0px">5</div>
<div class="c" style="left:86px;top:268px;letter-spacing:0.62px">=A7<span class="as">*</span>PI()/50</div>
<div class="c" style="left:228px;top:268px;letter-spacing:0.5px">=SIN(B7)</div>
<div class="c" style="left:341px;top:268px;letter-spacing:0.12px">=COS(B7)</div>
<div class="c" style="left:36px;top:287px;letter-spacing:1.2px;transform:scaleX(.95);font-size:15px;font-weight:bold;-webkit-text-stroke:0px">6</div>
<div class="c" style="left:86px;top:288px;letter-spacing:0.62px">=A8<span class="as">*</span>PI()/50</div>
<div class="c" style="left:228px;top:288px;letter-spacing:0.5px">=SIN(B8)</div>
<div class="c" style="left:341px;top:288px;letter-spacing:0.12px">=COS(B8)</div>
<div class="c" style="left:36px;top:308px;letter-spacing:1.2px;transform:scaleX(.95);font-size:15px;font-weight:bold;-webkit-text-stroke:0px">7</div>
<div class="c" style="left:86px;top:309px;letter-spacing:0.62px">=A9<span class="as">*</span>PI()/50</div>
<div class="c" style="left:228px;top:309px;letter-spacing:0.5px">=SIN(B9)</div>
<div class="c" style="left:341px;top:309px;letter-spacing:0.12px">=COS(B9)</div>
<div class="c" style="left:36px;top:328px;letter-spacing:1.2px;transform:scaleX(.95);font-size:15px;font-weight:bold;-webkit-text-stroke:0px">8</div>
<div class="c" style="left:86px;top:329px;letter-spacing:0.62px">=A10<span class="as">*</span>PI()/50</div>
<div class="c" style="left:228px;top:329px;letter-spacing:0.5px">=SIN(B10)</div>
<div class="c" style="left:341px;top:329px;letter-spacing:0.12px">=COS(B10)</div>
<div class="c" style="left:36px;top:348px;letter-spacing:1.2px;transform:scaleX(.95);font-size:15px;font-weight:bold;-webkit-text-stroke:0px">9</div>
<div class="c" style="left:86px;top:349px;letter-spacing:0.62px">=A11<span class="as">*</span>PI()/50</div>
<div class="c" style="left:228px;top:349px;letter-spacing:0.5px">=SIN(B11)</div>
<div class="c" style="left:341px;top:349px;letter-spacing:0.12px">=COS(B11)</div>
<div class="c" style="left:36px;top:368px;letter-spacing:1.2px;transform:scaleX(.95);font-size:15px;font-weight:bold;-webkit-text-stroke:0px">10</div>
<div class="c" style="left:86px;top:369px;letter-spacing:0.62px">=A12<span class="as">*</span>PI()/50</div>
<div class="c" style="left:228px;top:369px;letter-spacing:0.5px">=SIN(B12)</div>
<div class="c" style="left:341px;top:369px;letter-spacing:0.12px">=COS(B12)</div>
<div class="c" style="left:36px;top:388px;letter-spacing:1.2px;transform:scaleX(.95);font-size:15px;font-weight:bold;-webkit-text-stroke:0px">11</div>
<div class="c" style="left:86px;top:389px;letter-spacing:0.62px">=A13<span class="as">*</span>PI()/50</div>
<div class="c" style="left:228px;top:389px;letter-spacing:0.5px">=SIN(B13)</div>
<div class="c" style="left:341px;top:389px;letter-spacing:0.12px">=COS(B13)</div>
<div class="c" style="left:36px;top:408px;letter-spacing:1.2px;transform:scaleX(.95);font-size:15px;font-weight:bold;-webkit-text-stroke:0px">12</div>
<div class="c" style="left:86px;top:409px;letter-spacing:0.62px">=A14<span class="as">*</span>PI()/50</div>
<div class="c" style="left:228px;top:409px;letter-spacing:0.5px">=SIN(B14)</div>
<div class="c" style="left:341px;top:409px;letter-spacing:0.12px">=COS(B14)</div>
<div class="c" style="left:36px;top:428px;letter-spacing:1.2px;transform:scaleX(.95);font-size:15px;font-weight:bold;-webkit-text-stroke:0px">13</div>
<div class="c" style="left:86px;top:429px;letter-spacing:0.62px">=A15<span class="as">*</span>PI()/50</div>
<div class="c" style="left:228px;top:429px;letter-spacing:0.5px">=SIN(B15)</div>
<div class="c" style="left:341px;top:429px;letter-spacing:0.12px">=COS(B15)</div>
<div class="c" style="left:36px;top:448px;letter-spacing:1.2px;transform:scaleX(.95);font-size:15px;font-weight:bold;-webkit-text-stroke:0px">14</div>
<div class="c" style="left:86px;top:449px;letter-spacing:0.62px">=A16<span class="as">*</span>PI()/50</div>
<div class="c" style="left:228px;top:449px;letter-spacing:0.5px">=SIN(B16)</div>
<div class="c" style="left:341px;top:449px;letter-spacing:0.12px">=COS(B16)</div>
<div class="c" style="left:36px;top:468px;letter-spacing:1.2px;transform:scaleX(.95);font-size:15px;font-weight:bold;-webkit-text-stroke:0px">15</div>
<div class="c" style="left:86px;top:469px;letter-spacing:0.62px">=A17<span class="as">*</span>PI()/50</div>
<div class="c" style="left:228px;top:469px;letter-spacing:0.5px">=SIN(B17)</div>
<div class="c" style="left:341px;top:469px;letter-spacing:0.12px">=COS(B17)</div>
<div class="c" style="left:36px;top:488px;letter-spacing:1.2px;transform:scaleX(.95);font-size:15px;font-weight:bold;-webkit-text-stroke:0px">16</div>
<div class="c" style="left:86px;top:489px;letter-spacing:0.62px">=A18<span class="as">*</span>PI()/50</div>
<div class="c" style="left:228px;top:489px;letter-spacing:0.5px">=SIN(B18)</div>
<div class="c" style="left:341px;top:489px;letter-spacing:0.12px">=COS(B18)</div>
<div class="c" style="left:36px;top:508px;letter-spacing:1.2px;transform:scaleX(.95);font-size:15px;font-weight:bold;-webkit-text-stroke:0px">17</div>
<div class="c" style="left:86px;top:509px;letter-spacing:0.62px">=A19<span class="as">*</span>PI()/50</div>
<div class="c" style="left:228px;top:509px;letter-spacing:0.5px">=SIN(B19)</div>
<div class="c" style="left:341px;top:509px;letter-spacing:0.12px">=COS(B19)</div>
<div class="c" style="left:36px;top:528px;letter-spacing:1.2px;transform:scaleX(.95);font-size:15px;font-weight:bold;-webkit-text-stroke:0px">18</div>
<div class="c" style="left:86px;top:529px;letter-spacing:0.62px">=A20<span class="as">*</span>PI()/50</div>
<div class="c" style="left:228px;top:529px;letter-spacing:0.5px">=SIN(B20)</div>
<div class="c" style="left:341px;top:529px;letter-spacing:0.12px">=COS(B20)</div>
<div class="c" style="left:36px;top:548px;letter-spacing:1.2px;transform:scaleX(.95);font-size:15px;font-weight:bold;-webkit-text-stroke:0px">19</div>
<div class="c" style="left:86px;top:549px;letter-spacing:0.62px">=A21<span class="as">*</span>PI()/50</div>
<div class="c" style="left:228px;top:549px;letter-spacing:0.5px">=SIN(B21)</div>
<div class="c" style="left:341px;top:549px;letter-spacing:0.12px">=COS(B21)</div>
<svg class="a" style="left:484px;top:180px" width="531" height="211"><rect x="0.5" y="0.5" width="529" height="209" fill="#fff" stroke="#878787"/><path d="M530.5 2 V210.5 H2" stroke="#b0b0b0" fill="none" stroke-width="1"/><line x1="41.5" y1="16.5" x2="426" y2="16.5" stroke="#868686" stroke-width="1"/><line x1="41.5" y1="46.5" x2="426" y2="46.5" stroke="#868686" stroke-width="1"/><line x1="41.5" y1="75.5" x2="426" y2="75.5" stroke="#868686" stroke-width="1"/><line x1="41.5" y1="134.5" x2="426" y2="134.5" stroke="#868686" stroke-width="1"/><line x1="41.5" y1="164.5" x2="426" y2="164.5" stroke="#868686" stroke-width="1"/><line x1="41.5" y1="193.5" x2="426" y2="193.5" stroke="#868686" stroke-width="1"/><line x1="46.5" y1="16" x2="46.5" y2="194" stroke="#868686"/><line x1="41.5" y1="105.5" x2="426" y2="105.5" stroke="#868686"/><path d="M47.00 105.5 v5 M48.90 105.5 v5 M50.79 105.5 v5 M52.69 105.5 v5 M54.58 105.5 v5 M56.48 105.5 v5 M58.37 105.5 v5 M60.27 105.5 v5 M62.16 105.5 v5 M64.06 105.5 v5 M65.95 105.5 v5 M67.84 105.5 v5 M69.74 105.5 v5 M71.64 105.5 v5 M73.53 105.5 v5 M75.42 105.5 v5 M77.32 105.5 v5 M79.22 105.5 v5 M81.11 105.5 v5 M83.00 105.5 v5 M84.90 105.5 v5 M86.80 105.5 v5 M88.69 105.5 v5 M90.59 105.5 v5 M92.48 105.5 v5 M94.38 105.5 v5 M96.27 105.5 v5 M98.16 105.5 v5 M100.06 105.5 v5 M101.95 105.5 v5 M103.85 105.5 v5 M105.75 105.5 v5 M107.64 105.5 v5 M109.53 105.5 v5 M111.43 105.5 v5 M113.33 105.5 v5 M115.22 105.5 v5 M117.11 105.5 v5 M119.01 105.5 v5 M120.91 105.5 v5 M122.80 105.5 v5 M124.69 105.5 v5 M126.59 105.5 v5 M128.49 105.5 v5 M130.38 105.5 v5 M132.28 105.5 v5 M134.17 105.5 v5 M136.06 105.5 v5 M137.96 105.5 v5 M139.86 105.5 v5 M141.75 105.5 v5 M143.64 105.5 v5 M145.54 105.5 v5 M147.44 105.5 v5 M149.33 105.5 v5 M151.22 105.5 v5 M153.12 105.5 v5 M155.01 105.5 v5 M156.91 105.5 v5 M158.81 105.5 v5 M160.70 105.5 v5 M162.59 105.5 v5 M164.49 105.5 v5 M166.38 105.5 v5 M168.28 105.5 v5 M170.18 105.5 v5 M172.07 105.5 v5 M173.97 105.5 v5 M175.86 105.5 v5 M177.75 105.5 v5 M179.65 105.5 v5 M181.54 105.5 v5 M183.44 105.5 v5 M185.34 105.5 v5 M187.23 105.5 v5 M189.12 105.5 v5 M191.02 105.5 v5 M192.91 105.5 v5 M194.81 105.5 v5 M196.71 105.5 v5 M198.60 105.5 v5 M200.50 105.5 v5 M202.39 105.5 v5 M204.28 105.5 v5 M206.18 105.5 v5 M208.07 105.5 v5 M209.97 105.5 v5 M211.87 105.5 v5 M213.76 105.5 v5 M215.66 105.5 v5 M217.55 105.5 v5 M219.44 105.5 v5 M221.34 105.5 v5 M223.24 105.5 v5 M225.13 105.5 v5 M227.03 105.5 v5 M228.92 105.5 v5 M230.81 105.5 v5 M232.71 105.5 v5 M234.60 105.5 v5 M236.50 105.5 v5 M238.40 105.5 v5 M240.29 105.5 v5 M242.19 105.5 v5 M244.08 105.5 v5 M245.97 105.5 v5 M247.87 105.5 v5 M249.76 105.5 v5 M251.66 105.5 v5 M253.56 105.5 v5 M255.45 105.5 v5 M257.35 105.5 v5 M259.24 105.5 v5 M261.13 105.5 v5 M263.03 105.5 v5 M264.93 105.5 v5 M266.82 105.5 v5 M268.72 105.5 v5 M270.61 105.5 v5 M272.50 105.5 v5 M274.40 105.5 v5 M276.29 105.5 v5 M278.19 105.5 v5 M280.09 105.5 v5 M281.98 105.5 v5 M283.88 105.5 v5 M285.77 105.5 v5 M287.66 105.5 v5 M289.56 105.5 v5 M291.46 105.5 v5 M293.35 105.5 v5 M295.25 105.5 v5 M297.14 105.5 v5 M299.03 105.5 v5 M300.93 105.5 v5 M302.82 105.5 v5 M304.72 105.5 v5 M306.62 105.5 v5 M308.51 105.5 v5 M310.40 105.5 v5 M312.30 105.5 v5 M314.19 105.5 v5 M316.09 105.5 v5 M317.99 105.5 v5 M319.88 105.5 v5 M321.77 105.5 v5 M323.67 105.5 v5 M325.56 105.5 v5 M327.46 105.5 v5 M329.36 105.5 v5 M331.25 105.5 v5 M333.14 105.5 v5 M335.04 105.5 v5 M336.94 105.5 v5 M338.83 105.5 v5 M340.73 105.5 v5 M342.62 105.5 v5 M344.51 105.5 v5 M346.41 105.5 v5 M348.31 105.5 v5 M350.20 105.5 v5 M352.10 105.5 v5 M353.99 105.5 v5 M355.88 105.5 v5 M357.78 105.5 v5 M359.68 105.5 v5 M361.57 105.5 v5 M363.46 105.5 v5 M365.36 105.5 v5 M367.25 105.5 v5 M369.15 105.5 v5 M371.05 105.5 v5 M372.94 105.5 v5 M374.83 105.5 v5 M376.73 105.5 v5 M378.62 105.5 v5 M380.52 105.5 v5 M382.42 105.5 v5 M384.31 105.5 v5 M386.20 105.5 v5 M388.10 105.5 v5 M390.00 105.5 v5 M391.89 105.5 v5 M393.79 105.5 v5 M395.68 105.5 v5 M397.57 105.5 v5 M399.47 105.5 v5 M401.37 105.5 v5 M403.26 105.5 v5 M405.15 105.5 v5 M407.05 105.5 v5 M408.94 105.5 v5 M410.84 105.5 v5 M412.74 105.5 v5 M414.63 105.5 v5 M416.52 105.5 v5 M418.42 105.5 v5 M420.31 105.5 v5 M422.21 105.5 v5 M424.11 105.5 v5 M426.00 105.5 v5 " stroke="#9a9a9a" stroke-width="0.7"/><text x="33.5" y="21.1" font-size="14" text-rendering="geometricPrecision" text-anchor="end" fill="#222" font-family="Liberation Sans">1.5</text><text x="33.5" y="50.6" font-size="14" text-rendering="geometricPrecision" text-anchor="end" fill="#222" font-family="Liberation Sans">1</text><text x="33.5" y="80.1" font-size="14" text-rendering="geometricPrecision" text-anchor="end" fill="#222" font-family="Liberation Sans">0.5</text><text x="33.5" y="109.6" font-size="14" text-rendering="geometricPrecision" text-anchor="end" fill="#222" font-family="Liberation Sans">0</text><text x="33.5" y="139.1" font-size="14" text-rendering="geometricPrecision" text-anchor="end" fill="#222" font-family="Liberation Sans">-0.5</text><text x="33.5" y="168.6" font-size="14" text-rendering="geometricPrecision" text-anchor="end" fill="#222" font-family="Liberation Sans">-1</text><text x="33.5" y="198.1" font-size="14" text-rendering="geometricPrecision" text-anchor="end" fill="#222" font-family="Liberation Sans">-1.5</text><text transform="translate(52.6,112.0) rotate(-90)" font-size="14.1" text-anchor="end" fill="#222" font-family="Liberation Sans" text-rendering="geometricPrecision">0</text><text transform="translate(71.5,112.0) rotate(-90)" font-size="14.1" text-anchor="end" fill="#222" font-family="Liberation Sans" text-rendering="geometricPrecision">0.628318531</text><text transform="translate(90.5,112.0) rotate(-90)" font-size="14.1" text-anchor="end" fill="#222" font-family="Liberation Sans" text-rendering="geometricPrecision">1.256637061</text><text transform="translate(109.4,112.0) rotate(-90)" font-size="14.1" text-anchor="end" fill="#222" font-family="Liberation Sans" text-rendering="geometricPrecision">1.884955592</text><text transform="translate(128.4,112.0) rotate(-90)" font-size="14.1" text-anchor="end" fill="#222" font-family="Liberation Sans" text-rendering="geometricPrecision">2.513274123</text><text transform="translate(147.3,112.0) rotate(-90)" font-size="14.1" text-anchor="end" fill="#222" font-family="Liberation Sans" text-rendering="geometricPrecision">3.141592654</text><text transform="translate(166.3,112.0) rotate(-90)" font-size="14.1" text-anchor="end" fill="#222" font-family="Liberation Sans" text-rendering="geometricPrecision">3.769911184</text><text transform="translate(185.2,112.0) rotate(-90)" font-size="14.1" text-anchor="end" fill="#222" font-family="Liberation Sans" text-rendering="geometricPrecision">4.398229715</text><text transform="translate(204.2,112.0) rotate(-90)" font-size="14.1" text-anchor="end" fill="#222" font-family="Liberation Sans" text-rendering="geometricPrecision">5.026548246</text><text transform="translate(223.2,112.0) rotate(-90)" font-size="14.1" text-anchor="end" fill="#222" font-family="Liberation Sans" text-rendering="geometricPrecision">5.654866776</text><text transform="translate(242.1,112.0) rotate(-90)" font-size="14.1" text-anchor="end" fill="#222" font-family="Liberation Sans" text-rendering="geometricPrecision">6.283185307</text><text transform="translate(261.1,112.0) rotate(-90)" font-size="14.1" text-anchor="end" fill="#222" font-family="Liberation Sans" text-rendering="geometricPrecision">6.911503838</text><text transform="translate(280.0,112.0) rotate(-90)" font-size="14.1" text-anchor="end" fill="#222" font-family="Liberation Sans" text-rendering="geometricPrecision">7.539822369</text><text transform="translate(299.0,112.0) rotate(-90)" font-size="14.1" text-anchor="end" fill="#222" font-family="Liberation Sans" text-rendering="geometricPrecision">8.168140899</text><text transform="translate(317.9,112.0) rotate(-90)" font-size="14.1" text-anchor="end" fill="#222" font-family="Liberation Sans" text-rendering="geometricPrecision">8.79645943</text><text transform="translate(336.9,112.0) rotate(-90)" font-size="14.1" text-anchor="end" fill="#222" font-family="Liberation Sans" text-rendering="geometricPrecision">9.424777961</text><text transform="translate(355.8,112.0) rotate(-90)" font-size="14.1" text-anchor="end" fill="#222" font-family="Liberation Sans" text-rendering="geometricPrecision">10.05309649</text><text transform="translate(374.8,112.0) rotate(-90)" font-size="14.1" text-anchor="end" fill="#222" font-family="Liberation Sans" text-rendering="geometricPrecision">10.68141502</text><text transform="translate(393.7,112.0) rotate(-90)" font-size="14.1" text-anchor="end" fill="#222" font-family="Liberation Sans" text-rendering="geometricPrecision">11.30973355</text><text transform="translate(412.7,112.0) rotate(-90)" font-size="14.1" text-anchor="end" fill="#222" font-family="Liberation Sans" text-rendering="geometricPrecision">11.93805208</text><text transform="translate(431.6,112.0) rotate(-90)" font-size="14.1" text-anchor="end" fill="#222" font-family="Liberation Sans" text-rendering="geometricPrecision">12.56637061</text><path d="M47.00,105.65 L48.90,101.95 L50.79,98.26 L52.69,94.59 L54.58,90.98 L56.48,87.42 L58.37,83.93 L60.27,80.53 L62.16,77.23 L64.06,74.04 L65.95,70.97 L67.84,68.04 L69.74,65.26 L71.64,62.64 L73.53,60.19 L75.42,57.92 L77.32,55.83 L79.22,53.95 L81.11,52.27 L83.00,50.79 L84.90,49.54 L86.80,48.50 L88.69,47.70 L90.59,47.12 L92.48,46.77 L94.38,46.65 L96.27,46.77 L98.16,47.12 L100.06,47.70 L101.95,48.50 L103.85,49.54 L105.75,50.79 L107.64,52.27 L109.53,53.95 L111.43,55.83 L113.33,57.92 L115.22,60.19 L117.11,62.64 L119.01,65.26 L120.91,68.04 L122.80,70.97 L124.69,74.04 L126.59,77.23 L128.49,80.53 L130.38,83.93 L132.28,87.42 L134.17,90.98 L136.06,94.59 L137.96,98.26 L139.86,101.95 L141.75,105.65 L143.64,109.35 L145.54,113.04 L147.44,116.71 L149.33,120.32 L151.22,123.88 L153.12,127.37 L155.01,130.77 L156.91,134.07 L158.81,137.26 L160.70,140.33 L162.59,143.26 L164.49,146.04 L166.38,148.66 L168.28,151.11 L170.18,153.38 L172.07,155.47 L173.97,157.35 L175.86,159.03 L177.75,160.51 L179.65,161.76 L181.54,162.80 L183.44,163.60 L185.34,164.18 L187.23,164.53 L189.12,164.65 L191.02,164.53 L192.91,164.18 L194.81,163.60 L196.71,162.80 L198.60,161.76 L200.50,160.51 L202.39,159.03 L204.28,157.35 L206.18,155.47 L208.07,153.38 L209.97,151.11 L211.87,148.66 L213.76,146.04 L215.66,143.26 L217.55,140.33 L219.44,137.26 L221.34,134.07 L223.24,130.77 L225.13,127.37 L227.03,123.88 L228.92,120.32 L230.81,116.71 L232.71,113.04 L234.60,109.35 L236.50,105.65 L238.40,101.95 L240.29,98.26 L242.19,94.59 L244.08,90.98 L245.97,87.42 L247.87,83.93 L249.76,80.53 L251.66,77.23 L253.56,74.04 L255.45,70.97 L257.35,68.04 L259.24,65.26 L261.13,62.64 L263.03,60.19 L264.93,57.92 L266.82,55.83 L268.72,53.95 L270.61,52.27 L272.50,50.79 L274.40,49.54 L276.29,48.50 L278.19,47.70 L280.09,47.12 L281.98,46.77 L283.88,46.65 L285.77,46.77 L287.66,47.12 L289.56,47.70 L291.46,48.50 L293.35,49.54 L295.25,50.79 L297.14,52.27 L299.03,53.95 L300.93,55.83 L302.82,57.92 L304.72,60.19 L306.62,62.64 L308.51,65.26 L310.40,68.04 L312.30,70.97 L314.19,74.04 L316.09,77.23 L317.99,80.53 L319.88,83.93 L321.77,87.42 L323.67,90.98 L325.56,94.59 L327.46,98.26 L329.36,101.95 L331.25,105.65 L333.14,109.35 L335.04,113.04 L336.94,116.71 L338.83,120.32 L340.73,123.88 L342.62,127.37 L344.51,130.77 L346.41,134.07 L348.31,137.26 L350.20,140.33 L352.10,143.26 L353.99,146.04 L355.88,148.66 L357.78,151.11 L359.68,153.38 L361.57,155.47 L363.46,157.35 L365.36,159.03 L367.25,160.51 L369.15,161.76 L371.05,162.80 L372.94,163.60 L374.83,164.18 L376.73,164.53 L378.62,164.65 L380.52,164.53 L382.42,164.18 L384.31,163.60 L386.20,162.80 L388.10,161.76 L390.00,160.51 L391.89,159.03 L393.79,157.35 L395.68,155.47 L397.57,153.38 L399.47,151.11 L401.37,148.66 L403.26,146.04 L405.15,143.26 L407.05,140.33 L408.94,137.26 L410.84,134.07 L412.74,130.77 L414.63,127.37 L416.52,123.88 L418.42,120.32 L420.31,116.71 L422.21,113.04 L424.11,109.35 L426.00,105.65" fill="none" stroke="#b94a48" stroke-width="2.9" stroke-linejoin="round"/><path d="M47.00,46.65 L48.90,46.77 L50.79,47.12 L52.69,47.70 L54.58,48.50 L56.48,49.54 L58.37,50.79 L60.27,52.27 L62.16,53.95 L64.06,55.83 L65.95,57.92 L67.84,60.19 L69.74,62.64 L71.64,65.26 L73.53,68.04 L75.42,70.97 L77.32,74.04 L79.22,77.23 L81.11,80.53 L83.00,83.93 L84.90,87.42 L86.80,90.98 L88.69,94.59 L90.59,98.26 L92.48,101.95 L94.38,105.65 L96.27,109.35 L98.16,113.04 L100.06,116.71 L101.95,120.32 L103.85,123.88 L105.75,127.37 L107.64,130.77 L109.53,134.07 L111.43,137.26 L113.33,140.33 L115.22,143.26 L117.11,146.04 L119.01,148.66 L120.91,151.11 L122.80,153.38 L124.69,155.47 L126.59,157.35 L128.49,159.03 L130.38,160.51 L132.28,161.76 L134.17,162.80 L136.06,163.60 L137.96,164.18 L139.86,164.53 L141.75,164.65 L143.64,164.53 L145.54,164.18 L147.44,163.60 L149.33,162.80 L151.22,161.76 L153.12,160.51 L155.01,159.03 L156.91,157.35 L158.81,155.47 L160.70,153.38 L162.59,151.11 L164.49,148.66 L166.38,146.04 L168.28,143.26 L170.18,140.33 L172.07,137.26 L173.97,134.07 L175.86,130.77 L177.75,127.37 L179.65,123.88 L181.54,120.32 L183.44,116.71 L185.34,113.04 L187.23,109.35 L189.12,105.65 L191.02,101.95 L192.91,98.26 L194.81,94.59 L196.71,90.98 L198.60,87.42 L200.50,83.93 L202.39,80.53 L204.28,77.23 L206.18,74.04 L208.07,70.97 L209.97,68.04 L211.87,65.26 L213.76,62.64 L215.66,60.19 L217.55,57.92 L219.44,55.83 L221.34,53.95 L223.24,52.27 L225.13,50.79 L227.03,49.54 L228.92,48.50 L230.81,47.70 L232.71,47.12 L234.60,46.77 L236.50,46.65 L238.40,46.77 L240.29,47.12 L242.19,47.70 L244.08,48.50 L245.97,49.54 L247.87,50.79 L249.76,52.27 L251.66,53.95 L253.56,55.83 L255.45,57.92 L257.35,60.19 L259.24,62.64 L261.13,65.26 L263.03,68.04 L264.93,70.97 L266.82,74.04 L268.72,77.23 L270.61,80.53 L272.50,83.93 L274.40,87.42 L276.29,90.98 L278.19,94.59 L280.09,98.26 L281.98,101.95 L283.88,105.65 L285.77,109.35 L287.66,113.04 L289.56,116.71 L291.46,120.32 L293.35,123.88 L295.25,127.37 L297.14,130.77 L299.03,134.07 L300.93,137.26 L302.82,140.33 L304.72,143.26 L306.62,146.04 L308.51,148.66 L310.40,151.11 L312.30,153.38 L314.19,155.47 L316.09,157.35 L317.99,159.03 L319.88,160.51 L321.77,161.76 L323.67,162.80 L325.56,163.60 L327.46,164.18 L329.36,164.53 L331.25,164.65 L333.14,164.53 L335.04,164.18 L336.94,163.60 L338.83,162.80 L340.73,161.76 L342.62,160.51 L344.51,159.03 L346.41,157.35 L348.31,155.47 L350.20,153.38 L352.10,151.11 L353.99,148.66 L355.88,146.04 L357.78,143.26 L359.68,140.33 L361.57,137.26 L363.46,134.07 L365.36,130.77 L367.25,127.37 L369.15,123.88 L371.05,120.32 L372.94,116.71 L374.83,113.04 L376.73,109.35 L378.62,105.65 L380.52,101.95 L382.42,98.26 L384.31,94.59 L386.20,90.98 L388.10,87.42 L390.00,83.93 L391.89,80.53 L393.79,77.23 L395.68,74.04 L397.57,70.97 L399.47,68.04 L401.37,65.26 L403.26,62.64 L405.15,60.19 L407.05,57.92 L408.94,55.83 L410.84,53.95 L412.74,52.27 L414.63,50.79 L416.52,49.54 L418.42,48.50 L420.31,47.70 L422.21,47.12 L424.11,46.77 L426.00,46.65" fill="none" stroke="#98b954" stroke-width="2.9" stroke-linejoin="round"/><line x1="450" y1="92.30000000000001" x2="476.5" y2="92.30000000000001" stroke="#b94a48" stroke-width="2.9" stroke-linecap="round"/><text x="480" y="96" font-size="13" fill="#222" font-family="Liberation Sans">sin(x)</text><line x1="450" y1="118.5" x2="476.5" y2="118.5" stroke="#98b954" stroke-width="2.9" stroke-linecap="round"/><text x="480" y="122.5" font-size="13" fill="#222" font-family="Liberation Sans">cos(x)</text></svg>
<div class="a" style="left:1094px;top:128px;width:11px;height:440px;background:#e9ecf0;border-left:1px solid #d5d9de"></div>
<div class="a" style="left:1095px;top:129px;width:9px;height:6px;background:#f8f9fa;border:1px solid #8a9098"></div>
<div class="a" style="left:1096px;top:138px;width:0;height:0;border-left:4px solid transparent;border-right:4px solid transparent;border-bottom:4px solid #333"></div>
<div class="a" style="left:1095px;top:147px;width:10px;height:41px;background:linear-gradient(90deg,#f4f6f8,#e2e6eb);border:1px solid #9aa2ac;border-radius:2px"></div>
<div class="a" style="left:1097px;top:165px;width:5px;height:1px;background:#8a9098"></div><div class="a" style="left:1097px;top:167px;width:5px;height:1px;background:#8a9098"></div><div class="a" style="left:1097px;top:169px;width:5px;height:1px;background:#8a9098"></div>
<div class="a" style="left:1096px;top:560px;width:0;height:0;border-left:4px solid transparent;border-right:4px solid transparent;border-top:4px solid #333"></div>
<div class="a" style="left:0;top:568px;width:1105px;height:11px;background:linear-gradient(#e4e7eb,#d8dce1);border-top:1px solid #b8bdc4"></div>
<svg class="a" style="left:2px;top:570px" width="40" height="8"><path d="M2.5 1.5 v5 M7 1.5 L4 4 L7 6.5 Z M16 1.5 L13 4 L16 6.5 Z M23 1.5 L26 4 L23 6.5 Z M33 1.5 L36 4 L33 6.5 Z M37.5 1.5 v5" stroke="#444" fill="#444" stroke-width="1"/></svg>
<div class="a" style="left:43px;top:568px;width:97px;height:11px;background:linear-gradient(#e9ecef,#dde0e5);overflow:hidden"><div class="a" style="left:5px;top:-1px;font-size:11px;color:#5a5a5a;line-height:12px;letter-spacing:.5px">演習3.1 三角関数(1)</div></div>
<div class="a" style="left:141px;top:568px;width:97px;height:11px;background:#fdfdfd;overflow:hidden"><div class="a" style="left:5px;top:-1px;font-size:11px;color:#5a5a5a;line-height:12px;letter-spacing:.5px">演習3.1 三角関数(2)</div></div>
<div class="a" style="left:238px;top:568px;width:96px;height:11px;background:linear-gradient(#e9ecef,#dde0e5);overflow:hidden"><div class="a" style="left:5px;top:-1px;font-size:11px;color:#5a5a5a;line-height:12px;letter-spacing:.5px">演習3.1 三角関数(3)</div></div>
<div class="a" style="left:334px;top:568px;width:118px;height:11px;background:linear-gradient(#e9ecef,#dde0e5);overflow:hidden"><div class="a" style="left:5px;top:-1px;font-size:11px;color:#5a5a5a;line-height:12px;letter-spacing:.5px">演習3.2 半波整流回路(1)</div></div>
<div class="a" style="left:452px;top:568px;width:120px;height:11px;background:linear-gradient(#e9ecef,#dde0e5);overflow:hidden"><div class="a" style="left:5px;top:-1px;font-size:11px;color:#5a5a5a;line-height:12px;letter-spacing:.5px">演習3.2 半波整流回路(2)</div></div>
<div class="a" style="left:572px;top:568px;width:73px;height:11px;background:linear-gradient(#e9ecef,#dde0e5);overflow:hidden"><div class="a" style="left:5px;top:-1px;font-size:11px;color:#5a5a5a;line-height:12px;letter-spacing:.5px">演習3.3 合成波</div></div>
<div class="a" style="left:645px;top:568px;width:20px;height:11px;background:linear-gradient(#e9ecef,#dde0e5);overflow:hidden"><div class="a" style="left:5px;top:-1px;font-size:11px;color:#5a5a5a;line-height:12px;letter-spacing:.5px">演</div></div>
<svg class="a" style="left:0;top:568px" width="680" height="11"><path d="M137 11 L143 0 M235 11 L241 0 M331 11 L337 0 M449 11 L455 0 M569 11 L575 0 M642 11 L648 0 M662 11 L668 0 M43 0 v11" stroke="#8a9098" stroke-width="1" fill="none"/></svg>
<div class="a" style="left:667px;top:570px;width:0;height:0;border-top:4px solid transparent;border-bottom:4px solid transparent;border-right:4px solid #333"></div>
<div class="a" style="left:673px;top:569px;width:242px;height:10px;background:linear-gradient(#f4f6f8,#e2e6eb);border:1px solid #9aa2ac;border-radius:2px"></div>
<div class="a" style="left:791px;top:572px;width:5px;height:4px;border-left:1px solid #9aa0a8;border-right:1px solid #9aa0a8"></div><div class="a" style="left:793px;top:572px;width:1px;height:4px;background:#9aa0a8"></div>
<div class="a" style="left:1081px;top:570px;width:0;height:0;border-top:4px solid transparent;border-bottom:4px solid transparent;border-left:4px solid #333"></div>
<div class="a" style="left:1089px;top:569px;width:4px;height:10px;background:#f8f9fa;border:1px solid #8a9098"></div>
<div class="a" style="left:0;top:579px;width:1105px;height:15px;background:linear-gradient(#eef0f3,#dde1e6);border-top:1px solid #c8ccd2"></div>
<div class="a jp" style="left:5px;top:581px;font-size:10px;color:#444">コマンド</div>
<div class="a" style="left:35px;top:580px;width:1px;height:13px;background:#c0c5cc"></div>
<div class="a" style="left:937px;top:580px;width:1px;height:13px;background:#c0c5cc"></div>
<div class="a" style="left:938px;top:580px;width:12px;height:13px;background:linear-gradient(#fde99a,#fbd66e);border:1px solid #e0b44a"></div>
<svg class="a" style="left:940px;top:582px" width="9" height="9"><path d="M0.5 0.5 h8 v8 h-8 Z M0.5 3 h8 M0.5 5.5 h8 M3 0.5 v8 M5.5 0.5 v8" stroke="#555" fill="none" stroke-width="0.8"/></svg>
<div class="a" style="left:953px;top:582px;width:10px;height:9px;border:1px solid #666;background:#c8ccd2"></div><div class="a" style="left:955px;top:584px;width:6px;height:5px;background:#fff"></div>
<div class="a" style="left:967px;top:582px;width:10px;height:9px;border:1px solid #666;background:#fff"></div><div class="a" style="left:971px;top:582px;width:1px;height:9px;background:#666"></div>
<div class="a" style="left:983px;top:580px;font-size:11px;color:#333;line-height:13px;letter-spacing:-.4px;transform:scaleX(.9);transform-origin:0 0">160%</div>
<div class="a" style="left:1011px;top:580px;width:11px;height:11px;border-radius:50%;border:1px solid #666;background:#f4f4f4"></div><div class="a" style="left:1014px;top:585px;width:5px;height:1px;background:#222"></div>
<div class="a" style="left:1023px;top:585px;width:68px;height:1px;background:#9aa0a8"></div>
<div class="a" style="left:1056px;top:582px;width:1px;height:5px;background:#9aa0a8"></div>
<svg class="a" style="left:1061px;top:580px" width="8" height="11"><path d="M0.5 0.5 h7 v6 l-3.5 4 l-3.5 -4 Z" fill="#f8f8f8" stroke="#666"/></svg>
<div class="a" style="left:1091px;top:580px;width:11px;height:11px;border-radius:50%;border:1px solid #666;background:#f4f4f4"></div><div class="a" style="left:1094px;top:585px;width:5px;height:1px;background:#222"></div><div class="a" style="left:1096px;top:583px;width:1px;height:5px;background:#222"></div>
<div class="a" style="left:0;top:594px;width:1105px;height:6px;background:linear-gradient(90deg,#6f8248 0,#748548 140px,#6e5a40 160px,#6a4838 250px,#674636 700px,#7a8a50 740px,#85924f 1105px)"></div>
<div class="a" style="left:36px;top:594px;width:40px;height:6px;background:#8f9868;border:1px solid #a8a090;border-bottom:none"></div>
<div class="a" style="left:164px;top:594px;width:37px;height:6px;background:#8a7868;border:1px solid #a8a090;border-bottom:none"></div>
<div class="a" style="left:206px;top:594px;width:40px;height:6px;background:#8a7868;border:1px solid #a8a090;border-bottom:none"></div>
<div class="a" style="left:336px;top:594px;width:40px;height:6px;background:#8c7a6c;border:1px solid #a8a090;border-bottom:none"></div>
<div class="a" style="left:421px;top:594px;width:40px;height:6px;background:#8c7a6c;border:1px solid #a8a090;border-bottom:none"></div>
<div class="a" style="left:464px;top:594px;width:37px;height:6px;background:#9a9088;border:1px solid #a8a090;border-bottom:none"></div>
<svg class="a" style="left:882px;top:568px" width="12" height="16"><path d="M1.5 1.5 L1.5 12.5 L4.2 9.8 L6.3 14.3 L8.2 13.4 L6.2 9.2 L9.8 9.2 Z" fill="#fff" stroke="#111" stroke-width="1.1" stroke-linejoin="round"/></svg>
</body></html>
